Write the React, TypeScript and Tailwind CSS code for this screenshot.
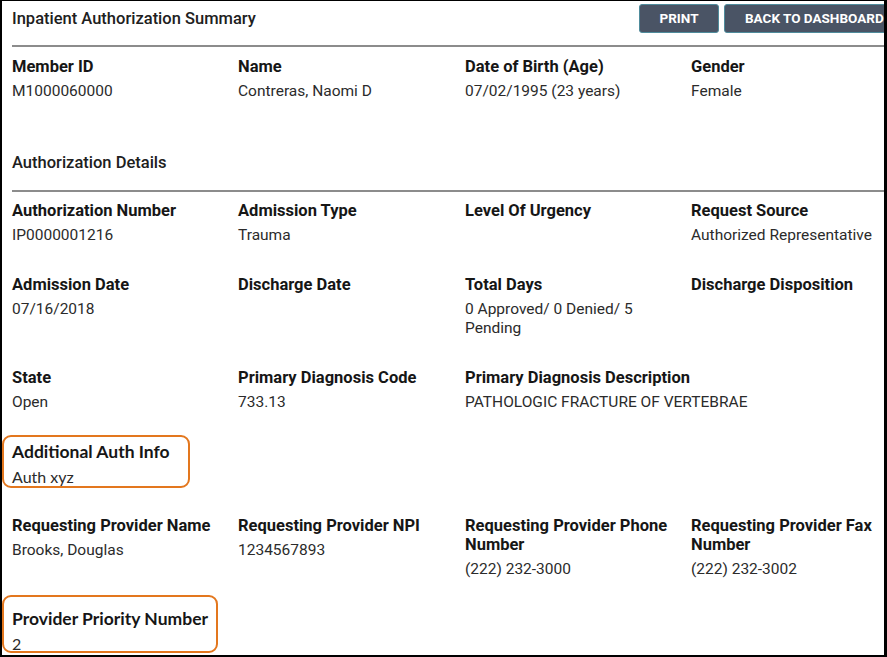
import React from "react";

interface Field {
    label: string;
    value?: string;
}

const memberFields: Field[] = [
    { label: "Member ID", value: "M1000060000" },
    { label: "Name", value: "Contreras, Naomi D" },
    { label: "Date of Birth (Age)", value: "07/02/1995 (23 years)" },
    { label: "Gender", value: "Female" },
];

const authFields: Field[] = [
    { label: "Authorization Number", value: "IP0000001216" },
    { label: "Admission Type", value: "Trauma" },
    { label: "Level Of Urgency" },
    { label: "Request Source", value: "Authorized Representative" },
    { label: "Admission Date", value: "07/16/2018" },
    { label: "Discharge Date" },
    { label: "Total Days", value: "0 Approved/ 0 Denied/ 5 Pending" },
    { label: "Discharge Disposition" },
    { label: "State", value: "Open" },
    { label: "Primary Diagnosis Code", value: "733.13" },
    { label: "Primary Diagnosis Description", value: "PATHOLOGIC FRACTURE OF VERTEBRAE" },
];

const providerFields: Field[] = [
    { label: "Requesting Provider Name", value: "Brooks, Douglas" },
    { label: "Requesting Provider NPI", value: "1234567893" },
    { label: "Requesting Provider Phone Number", value: "(222) 232-3000" },
    { label: "Requesting Provider Fax Number", value: "(222) 232-3002" },
];

const FieldItem: React.FC<{ field: Field; nowrap?: boolean }> = ({ field, nowrap }) => (
    <div className={`pr-3 ${nowrap ? "whitespace-nowrap" : ""}`}>
        <div className="font-bold text-[16.5px] text-[#161616] leading-[19px]">{field.label}</div>
        {field.value && (
            <div className="mt-[6px] text-[15.5px] text-[#2b2b2b] leading-[19px]">{field.value}</div>
        )}
    </div>
);

// campo resaltado con recuadro naranja (anotación)
const Highlighted: React.FC<{ field: Field; box: string }> = ({ field, box }) => (
    <div className="relative font-['Lato',sans-serif]">
        <span
            className={`absolute -left-[10px] border-2 border-[#e3771e] rounded-[9px] pointer-events-none ${box}`}
        />
        <div className="font-bold text-[17.5px] text-[#161616] leading-[19px]">{field.label}</div>
        <div className="mt-[6px] text-[16px] text-[#2b2b2b] leading-[19px]">{field.value}</div>
    </div>
);

const App: React.FC = () => {
    return (
        <div className="w-[887px] h-[657px] overflow-hidden bg-white border-l-2 border-t border-r-[3px] border-b-2 border-black font-['Roboto',sans-serif] text-[15px]">
            <div className="pl-[10px]">
                {/* Encabezado */}
                <div className="flex items-center justify-between pt-[3px] pb-[12px]">
                    <h1 className="font-medium text-[16.5px] text-[#202020] leading-[19px]">
                        Inpatient Authorization Summary
                    </h1>
                    <div className="flex gap-[5px] -mr-[40px]">
                        <button className="h-[29px] w-[80px] bg-[#4a5465] border border-[#4f8c9c] rounded-[3px] text-white text-[13.5px] font-bold">
                            PRINT
                        </button>
                        <button className="h-[29px] w-[200px] bg-[#4a5465] border border-[#4f8c9c] rounded-[3px] text-white text-[13.5px] font-bold text-left pl-[20px] whitespace-nowrap">
                            BACK TO DASHBOARD
                        </button>
                    </div>
                </div>
                <hr className="border-t-2 border-[#8c8c8c]" />

                {/* Datos del miembro */}
                <div className="grid grid-cols-[226px_227px_226px_1fr] pt-[10px]">
                    {memberFields.map((f) => (
                        <FieldItem key={f.label} field={f} />
                    ))}
                </div>

                <h2 className="font-medium text-[16.5px] text-[#202020] leading-[19px] mt-[52px] pb-[18px]">
                    Authorization Details
                </h2>
                <hr className="border-t-2 border-[#8c8c8c]" />

                {/* Detalles de autorización */}
                <div className="grid grid-cols-[226px_227px_226px_1fr] gap-y-[30px] pt-[9px]">
                    {authFields.map((f) => (
                        <FieldItem key={f.label} field={f} nowrap={f.label.startsWith("Primary Diagnosis D")} />
                    ))}
                </div>

                <div className="mt-[30px]">
                    <Highlighted
                        field={{ label: "Additional Auth Info", value: "Auth xyz" }}
                        box="-top-[7px] w-[188px] h-[53px]"
                    />
                </div>

                <div className="grid grid-cols-[226px_227px_226px_1fr] mt-[30px]">
                    {providerFields.map((f) => (
                        <FieldItem key={f.label} field={f} />
                    ))}
                </div>

                <div className="mt-[30px]">
                    <Highlighted
                        field={{ label: "Provider Priority Number", value: "2" }}
                        box="-top-[14px] w-[216px] h-[58px]"
                    />
                </div>
            </div>
        </div>
    );
};

export default App;
